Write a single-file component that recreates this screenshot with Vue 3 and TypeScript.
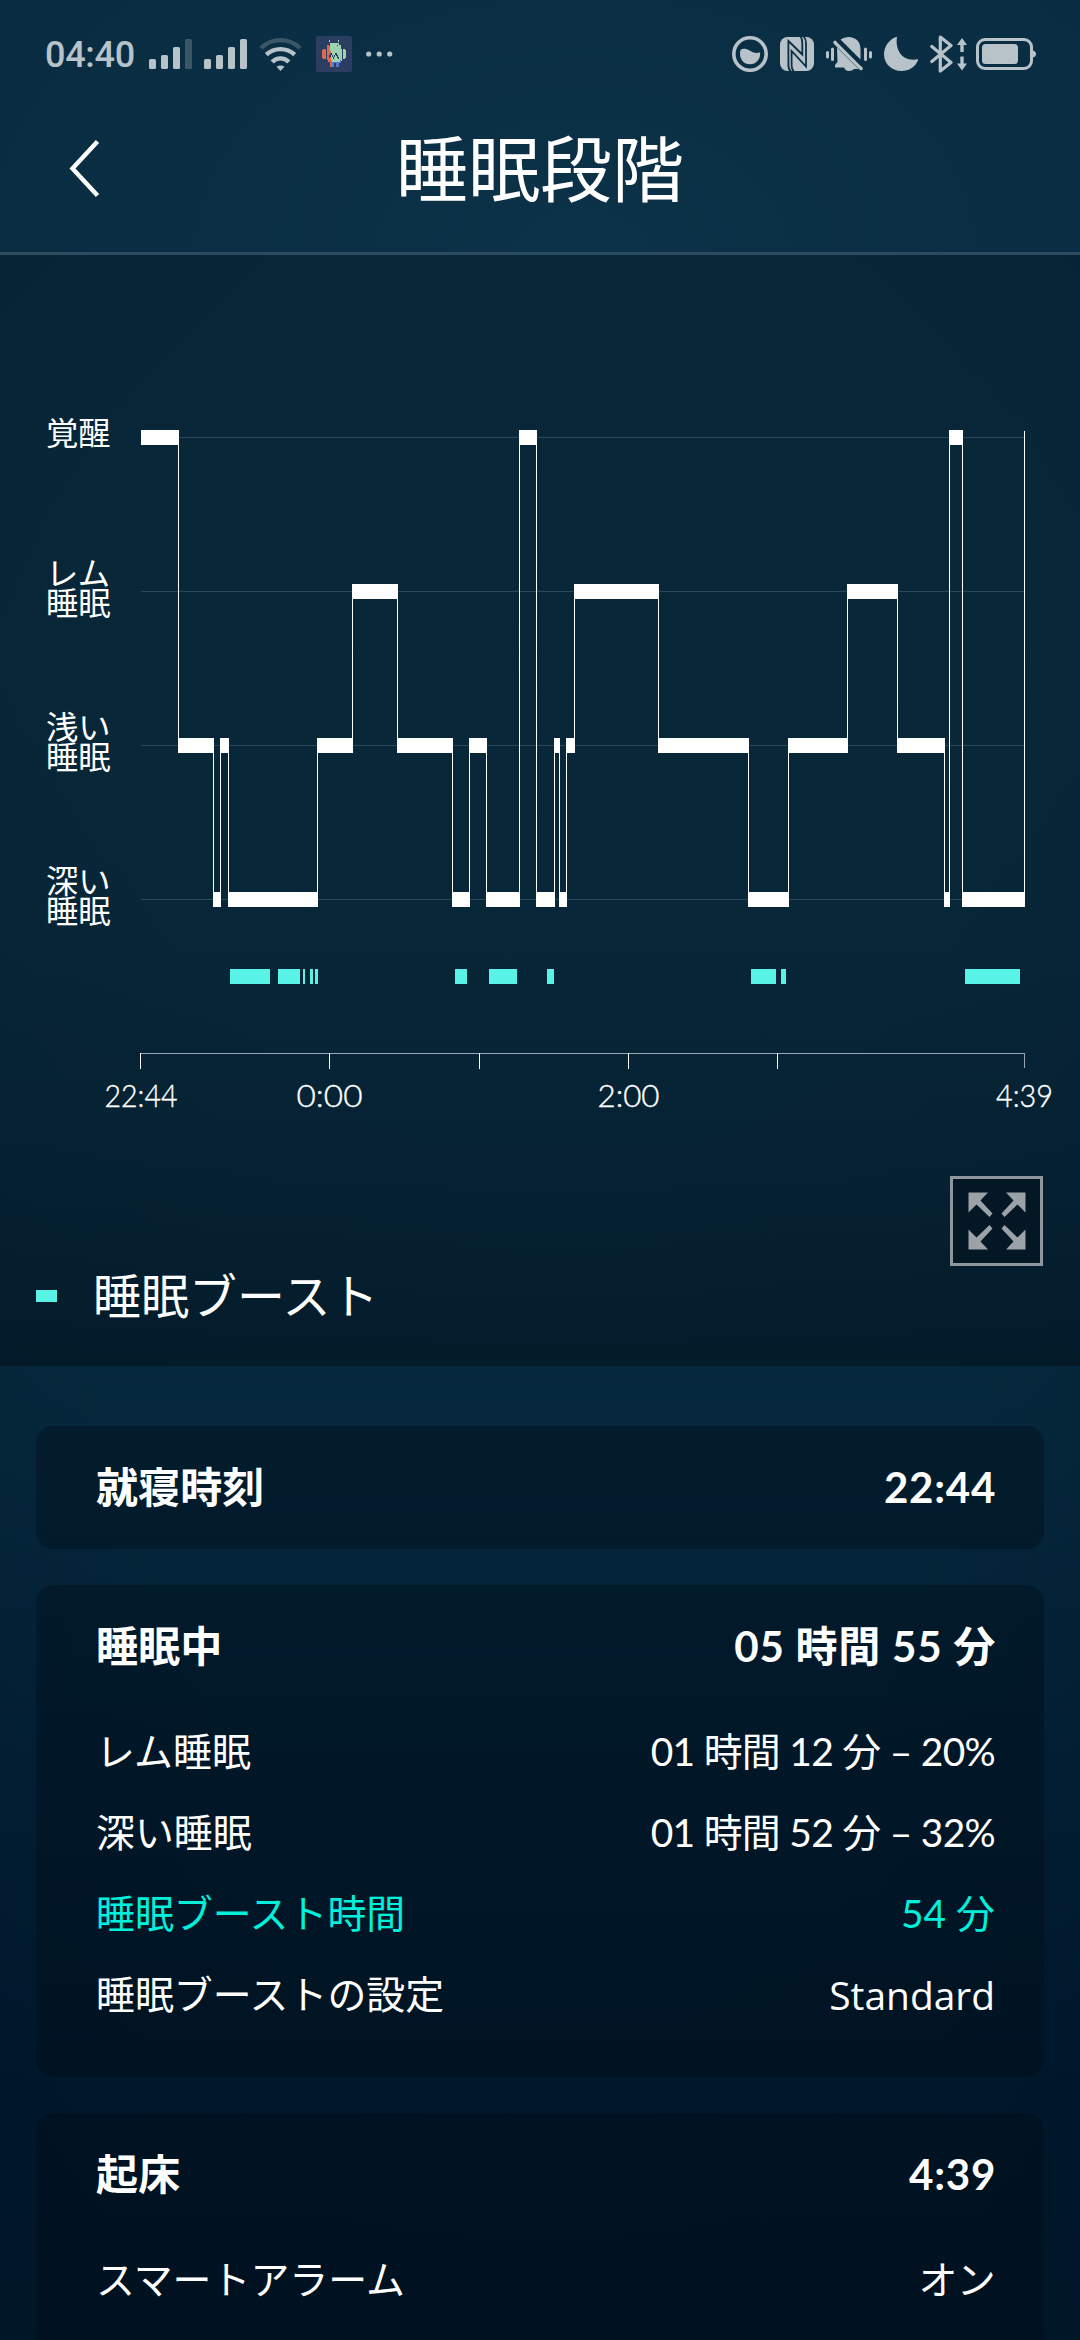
<script setup lang="ts">
type Stage = 'awake' | 'rem' | 'light' | 'deep'

interface Segment {
  stage: Stage
  start: number
}

interface DetailRow {
  label: string
  value: string
  kind?: 'accent' | 'mode'
}

interface Card {
  title: string
  value: string
  rows: DetailRow[]
}

const CHART_END = 1024
const BAR = 15

// Top edge of the bar that is drawn for each stage
const stageTop: Record<Stage, number> = { awake: 430, rem: 584, light: 738, deep: 892 }

const segments: Segment[] = [
  { stage: 'awake', start: 141 },
  { stage: 'light', start: 178 },
  { stage: 'deep', start: 213 },
  { stage: 'light', start: 220 },
  { stage: 'deep', start: 228 },
  { stage: 'light', start: 317 },
  { stage: 'rem', start: 352 },
  { stage: 'light', start: 397 },
  { stage: 'deep', start: 452 },
  { stage: 'light', start: 469 },
  { stage: 'deep', start: 486 },
  { stage: 'awake', start: 519 },
  { stage: 'deep', start: 536 },
  { stage: 'light', start: 554 },
  { stage: 'deep', start: 559 },
  { stage: 'light', start: 566 },
  { stage: 'rem', start: 574 },
  { stage: 'light', start: 658 },
  { stage: 'deep', start: 748 },
  { stage: 'light', start: 788 },
  { stage: 'rem', start: 847 },
  { stage: 'light', start: 897 },
  { stage: 'deep', start: 944 },
  { stage: 'awake', start: 949 },
  { stage: 'deep', start: 962 },
]

const bars = segments.map((s, i) => {
  const end = i + 1 < segments.length ? segments[i + 1].start : CHART_END
  return { x: s.start, y: stageTop[s.stage], width: end + 1 - s.start }
})

const steps = segments.slice(1).map((s, i) => {
  const a = stageTop[segments[i].stage]
  const b = stageTop[s.stage]
  return { x: s.start, y: Math.min(a, b) + 1, height: Math.abs(a - b) + BAR - 1 }
})

const boosts: [number, number][] = [
  [230, 270], [278, 300], [303, 305], [310, 313], [315, 318], [455, 467],
  [489, 517], [547, 554], [751, 776], [781, 786], [965, 1020],
]

const stageLabels = [
  { y: 445, lines: ['覚醒'] },
  { y: 585, lines: ['レム', '睡眠'] },
  { y: 739, lines: ['浅い', '睡眠'] },
  { y: 893, lines: ['深い', '睡眠'] },
]

const ticks = [140, 329, 479, 628, 777]

const timeLabels = [
  { x: 141, width: 73, text: '22:44' },
  { x: 329.5, width: 66, text: '0:00' },
  { x: 628.5, width: 62, text: '2:00' },
  { x: 1024.5, width: 57, text: '4:39' },
]

const cards: Card[] = [
  { title: '就寝時刻', value: '22:44', rows: [] },
  {
    title: '睡眠中',
    value: '05 時間 55 分',
    rows: [
      { label: 'レム睡眠', value: '01 時間 12 分 – 20%' },
      { label: '深い睡眠', value: '01 時間 52 分 – 32%' },
      { label: '睡眠ブースト時間', value: '54 分', kind: 'accent' },
      { label: '睡眠ブーストの設定', value: 'Standard', kind: 'mode' },
    ],
  },
  {
    title: '起床',
    value: '4:39',
    rows: [{ label: 'スマートアラーム', value: 'オン' }],
  },
]
</script>

<template>
  <div class="screen">
    <header class="top">
      <div class="status">
        <span class="clock">04:40</span>
        <svg class="signal" width="44" height="40" viewBox="0 0 44 40">
          <rect x="0" y="25" width="7" height="10" rx="1.5" />
          <rect x="12" y="21" width="7" height="14" rx="1.5" />
          <rect x="24" y="13" width="7" height="22" rx="1.5" />
          <rect x="36" y="5" width="7" height="30" rx="1.5" class="dim" />
        </svg>
        <svg class="signal" width="44" height="40" viewBox="0 0 44 40">
          <rect x="0" y="25" width="7" height="10" rx="1.5" />
          <rect x="12" y="21" width="7" height="14" rx="1.5" />
          <rect x="24" y="13" width="7" height="22" rx="1.5" />
          <rect x="36" y="5" width="7" height="30" rx="1.5" />
        </svg>
        <svg class="wifi" width="43" height="40" viewBox="0 0 43 40">
          <path class="arc dim-arc" d="M2 14A28 28 0 0 1 41 14" />
          <path class="arc" d="M7.3 20.7A21 21 0 0 1 35.7 20.7" />
          <path class="arc" d="M13.2 28A11.3 11.3 0 0 1 29.8 28" />
          <path d="M17.5 32.8Q21.5 30.2 25.5 32.8L21.5 37Z" />
        </svg>
        <svg class="app-icon" width="36" height="36" viewBox="0 0 36 36" shape-rendering="crispEdges">
          <rect width="36" height="36" rx="2" fill="#2b3e62" shape-rendering="auto" />
          <path fill="#9dd3ae" d="M13 4h1v2h-1zM22 4h1v2h-1zM14 7h9v2h2v4h1v12h-2v1h-10z" />
          <path fill="#9dd3ae" d="M27 13h2v1h1v8h-1v1h-2z" />
          <path fill="#dd6a50" d="M11 9h3v6h1v9h1v7h-2v-5h-2v-2h-1zM7 13h3v10h-3v-1h-1v-8h1z" />
          <path fill="#5577d0" d="M16 26h8v-2h1v3h-2v4h-3v-4h-2v4h-2z" />
          <path fill="#2b3e62" d="M12 21h1v-2h1v-2h2v2h1v2h1v-2h1v-2h2v2h1v2h1v2h-1v-1h-1v-2h-1v-1h-1v2h-1v2h-1v-2h-1v-2h-1v2h-1v1h-1zM13 9h1v1h-1zM21 9h1v1h-1z" />
        </svg>
        <svg class="more" width="27" height="36" viewBox="0 0 27 36">
          <circle cx="2.7" cy="18" r="2.6" /><circle cx="13.2" cy="18" r="2.6" /><circle cx="23.7" cy="18" r="2.6" />
        </svg>

        <div class="indicators">
          <svg width="36" height="40" viewBox="0 0 36 40">
            <circle cx="18" cy="20" r="16.2" fill="none" stroke="#b7c2c9" stroke-width="3.6" />
            <path d="M8 18.5C8 14 13 14 18 16.7C22 19 25 19.5 28 18.2C29 25 24 30.3 18 30.3C12 30.3 7.5 25.5 8 18.5Z" />
          </svg>
          <svg class="nfc" width="34" height="40" viewBox="0 0 34 40">
            <rect y="3" width="34" height="34" rx="7.5" />
            <g fill="none" stroke="#0a2e43" stroke-width="1.8">
              <path d="M10.8 37.5Q8.4 35.5 8.4 31V7L22.3 20.500V9Q22.3 4.500 20.500 2.500" />
              <path d="M13.600 37.500Q11.600 35 11.600 31V17L26 32.500V9Q26 5 23.600 2.500" />
            </g>
          </svg>
          <svg class="bell" width="46" height="40" viewBox="0 0 46 40">
            <path d="M14.500 5.500Q18 3 22.500 3Q34 3.500 34.500 15V25.500ZM11 13.500L32.500 35H28Q26.500 37 23 37Q19.500 37 18 33.500H9V31L11.500 28Z" />
            <path d="M9 8.500L35 34.500" stroke="#b7c2c9" stroke-width="3.600" stroke-linecap="round" />
            <path d="M11.800 7.200L36 31.300" stroke="#0a2f44" stroke-width="2.400" />
            <path d="M1.500 18.500V23M6.500 15V25.500M39.500 15V25.500M44.500 18.500V23" stroke="#b7c2c9" stroke-width="3" stroke-linecap="round" />
          </svg>
          <svg class="moon" width="35" height="40" viewBox="0 0 35 40">
            <path d="M13 3.200C11 15 17.500 28 33.500 25.300Q34.500 25 34 26.300C31 33.500 25 37 17.500 37C8 37 0 30 0 20.500C0 12 5.500 5.500 12 3Q13.200 2.500 13 3.200Z" />
          </svg>
          <svg class="bt" width="38" height="40" viewBox="0 0 38 40">
            <path d="M1.800 12.500L21 28.500L10.300 37V3L21 11.500L1.800 27.500" fill="none" stroke="#b7c2c9" stroke-width="3.200" stroke-linejoin="round" stroke-linecap="round" />
            <path d="M32 4L37 11H33.700V18H30.300V11H27ZM32 36.500L27 29.500H30.300V22.500H33.700V29.500H37Z" />
          </svg>
          <svg class="battery" width="60" height="40" viewBox="0 0 60 40">
            <rect x="1.500" y="5.500" width="54" height="29" rx="7.500" fill="none" stroke="#b7c2c9" stroke-width="3" />
            <rect x="6" y="10" width="36" height="20" rx="3.500" />
            <path d="M57 16.500Q60 17.500 60 20Q60 22.500 57 23.500Z" />
          </svg>
        </div>
      </div>
      <div class="title-bar">
        <svg class="back" width="34" height="64" viewBox="0 0 34 64">
          <path d="M29.500 5.500L4.500 32.500L29.500 59.500" fill="none" stroke="#fff" stroke-width="4.400" />
        </svg>
        <h1>睡眠段階</h1>
      </div>
    </header>

    <section class="panel">
      <svg class="chart" width="1080" height="895" viewBox="0 255 1080 895">
        <g shape-rendering="crispEdges">
          <rect v-for="(top, key) in stageTop" :key="key" x="141" :y="top + 7" width="884" height="1" class="grid" />
          <rect v-for="(b, i) in bars" :key="'b' + i" :x="b.x" :y="b.y" :width="b.width" :height="BAR" fill="#fff" />
          <rect v-for="(s, i) in steps" :key="'s' + i" :x="s.x" :y="s.y" width="1" :height="s.height" fill="#fff" />
          <rect :x="CHART_END" y="431" width="1" height="476" fill="#fff" />
          <rect v-for="([from, to], i) in boosts" :key="'o' + i" :x="from" y="969" :width="to - from" height="15" class="boost" />
          <rect x="141" y="1053" width="884" height="1" class="axis" />
          <rect v-for="t in ticks" :key="t" :x="t" y="1053" width="1" height="16" fill="#fff" />
          <rect x="1024" y="1053" width="1" height="15" class="axis" />
        </g>
        <text v-for="l in stageLabels" :key="l.y" class="stage-label">
          <tspan v-for="(line, i) in l.lines" :key="line" x="46" :y="l.y + i * 30">{{ line }}</tspan>
        </text>
        <text
          v-for="t in timeLabels"
          :key="t.text"
          :x="t.x"
          y="1107"
          :textLength="t.width"
          lengthAdjust="spacingAndGlyphs"
          class="time-label"
        >{{ t.text }}</text>
      </svg>
      <div class="expand">
        <svg width="58" height="58" viewBox="0 0 58 58">
          <path d="M0.500 0.500H20L12.500 8.500L24.500 21.500L21.500 25L8.500 12.500L0.500 20.500Z" />
          <path d="M57.500 0.500H38L45.500 8.500L33.500 21.500L36.500 25L49.500 12.500L57.500 20.500Z" />
          <path d="M0.500 57.500H20L12.500 49.500L24.500 36.500L21.500 33L8.500 45.500L0.500 37.500Z" />
          <path d="M57.500 57.500H38L45.500 49.500L33.500 36.500L36.500 33L49.500 45.500L57.500 37.500Z" />
        </svg>
      </div>
      <div class="legend">
        <span class="swatch"></span>
        <span class="legend-name">睡眠ブースト</span>
      </div>
    </section>

    <main class="cards">
      <article v-for="c in cards" :key="c.title" class="card" :class="{ detailed: c.rows.length }">
        <div class="head">
          <span>{{ c.title }}</span>
          <span class="value">{{ c.value }}</span>
        </div>
        <div v-for="r in c.rows" :key="r.label" class="row" :class="r.kind">
          <span>{{ r.label }}</span>
          <span class="value">{{ r.value }}</span>
        </div>
      </article>
    </main>
  </div>
</template>

<style>
html,
body {
  margin: 0;
  background: #001726;
}
</style>

<style scoped>
.screen {
  width: 1080px;
  height: 2340px;
  overflow: hidden;
  color: #fff;
  font-family: Lato, 'Noto Sans CJK JP', sans-serif;
  background:
    radial-gradient(ellipse 800px 1500px at 50% 1000px, rgba(0, 16, 34, 0) 60%, rgba(0, 16, 34, 0.18) 100%),
    linear-gradient(#0a2e43 0, #0c3249 254px, #06283c 1366px, #042439 1570px, #021e33 1820px, #00192d 2080px, #001829 2340px);
}

.top {
  height: 252px;
  border-bottom: 3px solid #2d4c5f;
  background: radial-gradient(ellipse 640px 420px at 54% 100%, #0c3249 0%, #0a2f44 55%, #092c41 100%);
}

.status {
  display: flex;
  align-items: center;
  height: 108px;
  padding: 0 44px 0 45px;
  color: #b7c2c9;
  fill: #b7c2c9;
}

.clock {
  width: 104px;
  padding-top: 2px;
  font: 500 36px/40px Roboto, sans-serif;
  letter-spacing: -0.3px;
}

.signal {
  margin-right: 11px;
}

.dim {
  fill: #3b5767;
}

.arc {
  fill: none;
  stroke: #b7c2c9;
  stroke-width: 4.4;
}

.dim-arc {
  stroke: #3b5767;
}

.app-icon,
.more {
  margin-left: 14px;
}

.indicators {
  display: flex;
  margin-left: auto;
}

.nfc,
.bell {
  margin-left: 12px;
}

.moon {
  margin-left: 12px;
}

.bt {
  margin-left: 11px;
}

.battery {
  margin-left: 8px;
}

.title-bar {
  display: grid;
  grid-template-columns: 68px 34px 1fr 102px;
  align-items: center;
  height: 120px;
}

.back {
  grid-column: 2;
}

h1 {
  grid-column: 3;
  margin: 0;
  padding-bottom: 7px;
  font: 400 72px/113px 'Noto Sans CJK JP', sans-serif;
  text-align: center;
}

.panel {
  display: flex;
  flex-direction: column;
  height: 1111px;
  background:
    radial-gradient(ellipse 900px 950px at 52% 400px, rgba(0, 20, 36, 0) 50%, rgba(0, 20, 36, 0.2) 100%),
    linear-gradient(#082638 0, #082738 400px, #072638 700px, #062334 880px, #051f2f 1030px, #041c2a 100%);
}

.chart {
  display: block;
  flex: none;
}

.grid {
  fill: #2c4856;
}

.axis {
  fill: #9ba6b3;
}

.boost {
  fill: #58f3e6;
}

.stage-label {
  fill: #fff;
  font: 400 32.3px 'Noto Sans CJK JP', sans-serif;
}

.time-label {
  fill: #fff;
  font: 300 32px Lato, sans-serif;
  text-anchor: middle;
  stroke: #fff;
  stroke-width: 0.4px;
}

.expand {
  display: flex;
  flex: none;
  align-items: center;
  justify-content: center;
  align-self: flex-end;
  box-sizing: border-box;
  width: 93px;
  height: 90px;
  margin: 26px 37px 0 0;
  border: 3px solid #8e979e;
  background: #031724;
  fill: #9ba2a8;
}

.legend {
  display: flex;
  align-items: center;
  height: 60px;
  padding-left: 36px;
}

.legend-name {
  padding-bottom: 6px;
  font: 400 48px/54px 'Noto Sans CJK JP', sans-serif;
}

.swatch {
  width: 21px;
  height: 12px;
  margin-right: 36px;
  background: #58f3e6;
}

.cards {
  display: flex;
  flex-direction: column;
  gap: 36px;
  padding: 60px 36px 0;
}

.card {
  padding: 0 49px 1px 60px;
  border-radius: 18px;
  background: rgba(0, 12, 20, 0.36);
}

.card.detailed {
  padding-bottom: 42px;
}

.head,
.row {
  display: flex;
  justify-content: space-between;
  font-size: 38.9px;
  line-height: 81px;
}

.head {
  font-size: 42.1px;
  font-weight: 700;
  line-height: 122px;
}

.head .value {
  margin-right: -1px;
  letter-spacing: 0.7px;
}

.row .value {
  letter-spacing: -0.7px;
}

.head + .row {
  margin-top: 4px;
}

.row.accent {
  color: #00f0dc;
}

.row.accent .value {
  letter-spacing: 0;
}

.row.mode .value {
  font-family: 'Open Sans', sans-serif;
  letter-spacing: 0;
}
</style>
